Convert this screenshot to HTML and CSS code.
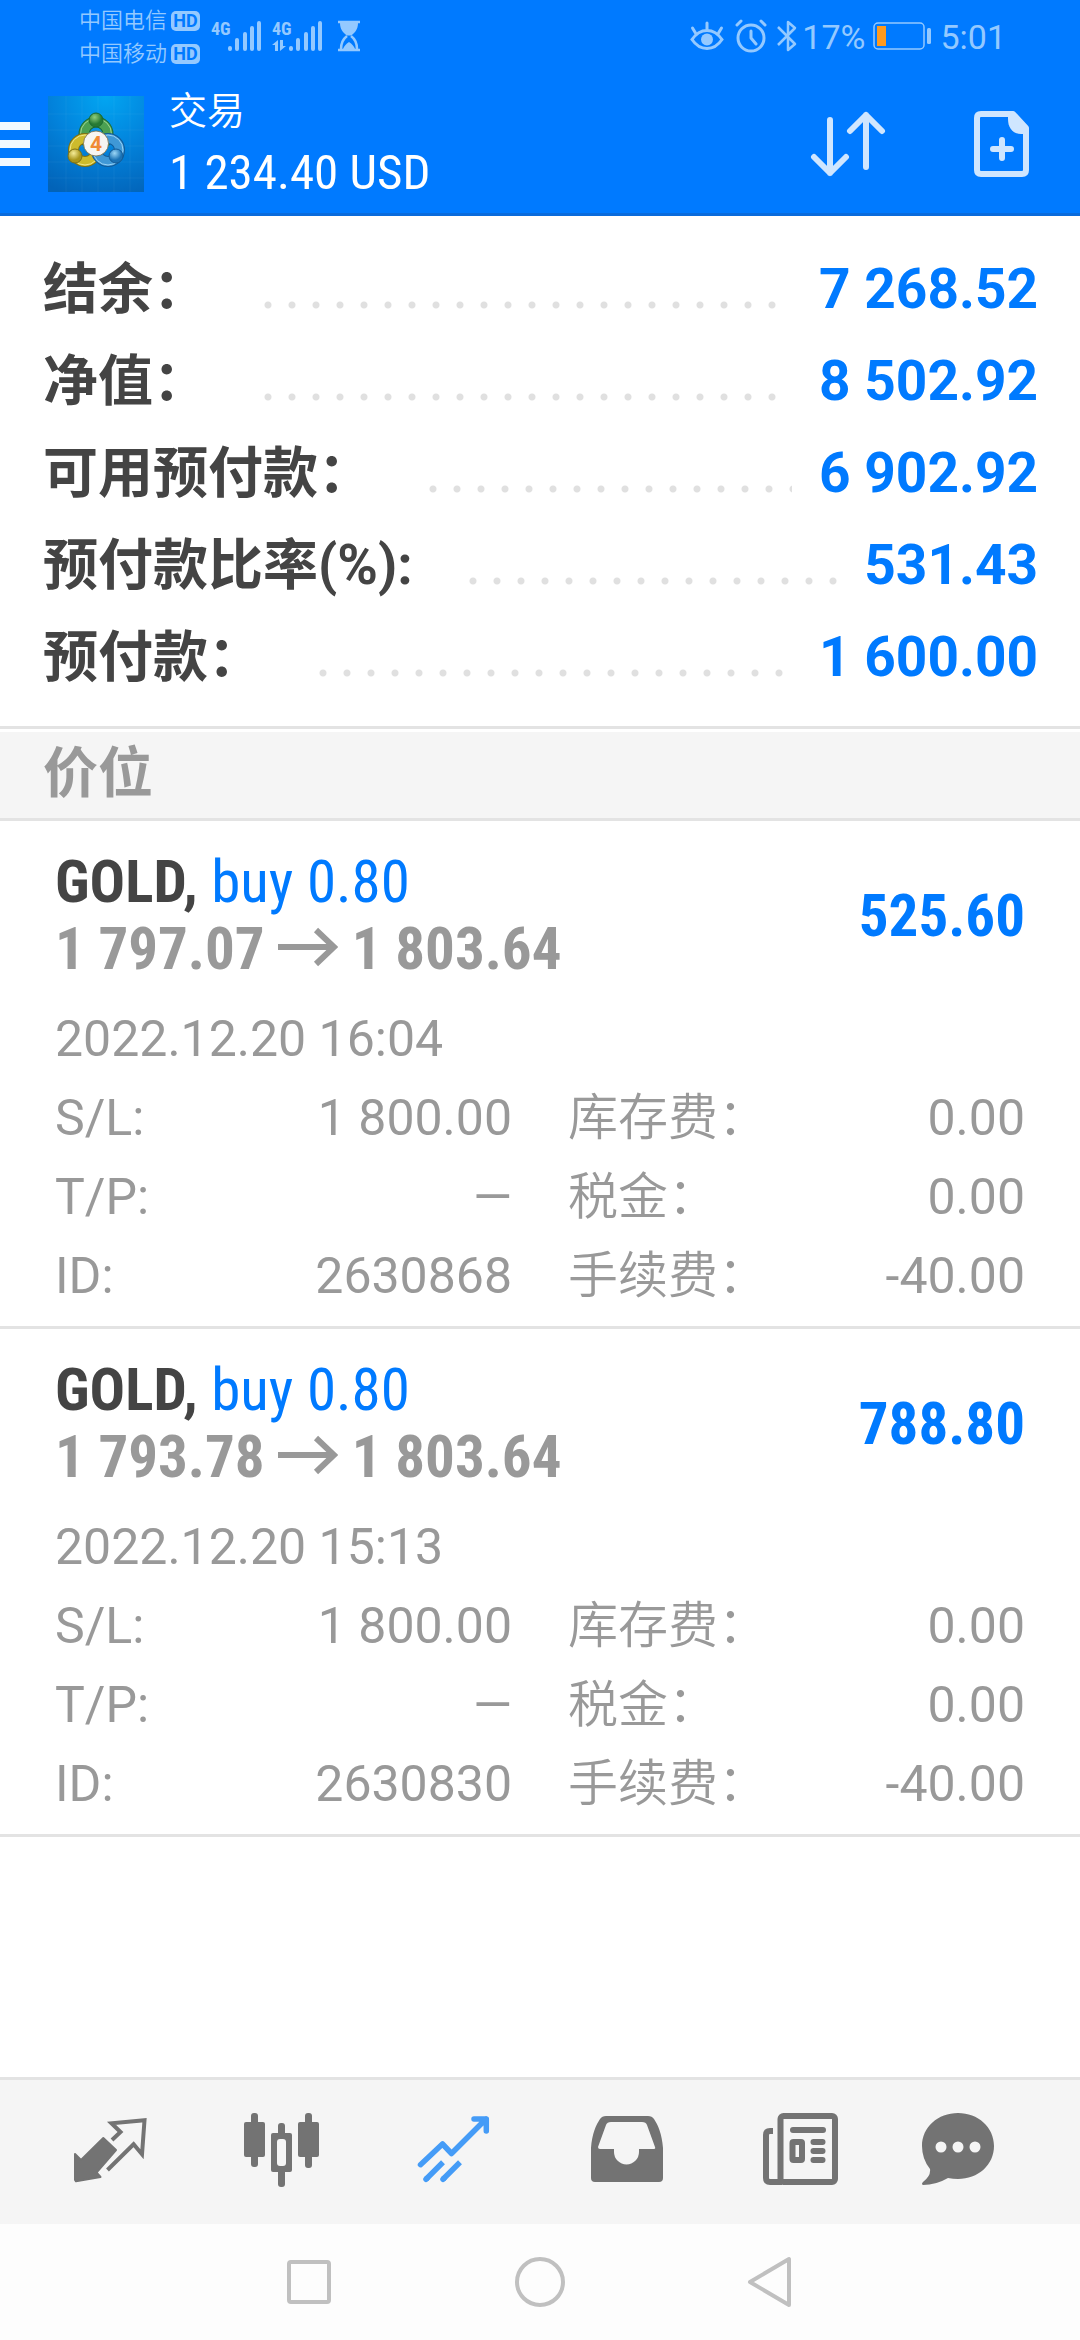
FILE: index.html
```html
<!DOCTYPE html>
<html lang="zh-CN">
<head>
<meta charset="utf-8">
<meta name="viewport" content="width=device-width, initial-scale=1">
<title>交易</title>
<link rel="stylesheet" href="styles.css">
</head>
<body>
<div class="app">
  <header class="header">
    <div class="status">
      <div class="carriers">
        <div class="carrier">中国电信<span class="hd">HD</span></div>
        <div class="carrier">中国移动<span class="hd">HD</span></div>
      </div>
      <div class="signal">
        <span class="net">4G</span>
        <svg width="34" height="32" viewBox="0 0 34 32" fill="none" stroke="currentColor" stroke-width="4" stroke-linecap="round"><path d="M2 28v1M9 20v9M17 14v15M24 8v21M31 3v26"/></svg>
      </div>
      <div class="signal">
        <span class="net">4G</span>
        <svg class="data" width="14" height="12" viewBox="0 0 14 12" fill="currentColor"><path d="M6 0v11H3V5H0zM8 0h3v6h3l-6 5z"/></svg>
        <svg width="34" height="32" viewBox="0 0 34 32" fill="none" stroke="currentColor" stroke-width="4" stroke-linecap="round"><path d="M2 28v1M9 20v9M17 14v15M24 8v21M31 3v26"/></svg>
      </div>
      <svg class="hourglass" width="24" height="32" viewBox="0 0 24 32"><path d="M1 2h22M1 30h22" stroke="currentColor" stroke-width="2.500"/><path d="M3 3h18c0 6-3 10-7 12.500h-4C6 13 3 9 3 3z" fill="currentColor"/><path d="M10 16c-4 3-6 7-6 13M14 16c4 3 6 7 6 13" fill="none" stroke="currentColor" stroke-width="2.500"/><path d="M6 29c1-3 3-5 6-7 3 2 5 4 6 7z" fill="currentColor"/></svg>
      <div class="status-right">
        <svg class="eye" width="34" height="32" viewBox="0 0 34 32" fill="none" stroke="currentColor" stroke-width="3" stroke-linecap="round"><path d="M2 19.500c4-6 9-9 15-9s11 3 15 9c-4 6-9 9-15 9s-11-3-15-9zM17 3v7M2.500 8l3 5M31.500 8l-3 5"/><circle cx="17" cy="19.500" r="6" fill="currentColor" stroke="none"/></svg>
        <svg class="alarm" width="32" height="34" viewBox="0 0 32 34" fill="none" stroke="currentColor" stroke-width="3" stroke-linecap="round" stroke-linejoin="round"><circle cx="16" cy="19" r="13"/><path d="M16 12v7l5 6M2 6l4-4M30 6l-4-4"/></svg>
        <svg class="bluetooth" width="22" height="34" viewBox="0 0 22 34" fill="none" stroke="currentColor" stroke-width="2.500" stroke-linejoin="round"><path d="M2 8l17 17-7 6V3l7 6L2 26"/></svg>
        <span class="status-text percent">17%</span>
        <svg class="battery" width="59" height="30" viewBox="0 0 59 30"><rect x="1" y="2" width="50" height="26" rx="4" fill="none" stroke="currentColor" stroke-width="1.500"/><rect x="4" y="5" width="9" height="20" fill="#ff9a1f"/><rect x="54" y="7" width="4" height="16" rx="1.500" fill="currentColor"/></svg>
        <span class="status-text">5:01</span>
      </div>
    </div>
    <div class="appbar">
      <button class="icon-button menu" aria-label="菜单"><svg width="30" height="48" viewBox="0 0 30 48" fill="#f2f9ff"><path d="M0 2h30v8H0zM0 20h30v8H0zM0 38h30v8H0z"/></svg></button>
      <svg class="logo" width="96" height="96" viewBox="0 0 96 96">
        <defs>
          <radialGradient id="sky" cx=".6" cy="0" r="1.100"><stop offset="0" stop-color="#02a6f2"/><stop offset=".5" stop-color="#0283dc"/><stop offset="1" stop-color="#0263b8"/></radialGradient>
          <radialGradient id="green" cx=".4" cy=".3"><stop offset="0" stop-color="#8fce7c"/><stop offset="1" stop-color="#267a33"/></radialGradient>
          <radialGradient id="gold" cx=".4" cy=".3"><stop offset="0" stop-color="#f5ec98"/><stop offset="1" stop-color="#a8951a"/></radialGradient>
          <radialGradient id="blue" cx=".4" cy=".3"><stop offset="0" stop-color="#9bd6f6"/><stop offset="1" stop-color="#1a72b5"/></radialGradient>
        </defs>
        <rect width="96" height="96" fill="url(#sky)"/>
        <path d="M18 0v96M34 0v96M50 0v96M66 0v96M82 0v96M0 18h96M0 34h96M0 50h96M0 66h96M0 82h96" stroke="#fff" stroke-opacity=".05"/>
        <g fill="none">
          <circle cx="48" cy="38" r="12" stroke="#1c6a30" stroke-width="11"/>
          <circle cx="48" cy="38" r="12" stroke="#4ba052" stroke-width="9"/>
          <circle cx="48" cy="38" r="15.500" stroke="#9fd58f"/>
          <circle cx="37" cy="54" r="11.500" stroke="#7d7015" stroke-width="11"/>
          <circle cx="37" cy="54" r="11.500" stroke="#cdbb2c" stroke-width="9"/>
          <circle cx="37" cy="54" r="15" stroke="#efe58a"/>
          <circle cx="60" cy="54" r="11.500" stroke="#125b98" stroke-width="11"/>
          <circle cx="60" cy="54" r="11.500" stroke="#3f98d6" stroke-width="9"/>
          <circle cx="60" cy="54" r="15" stroke="#9bd3f5"/>
        </g>
        <circle cx="48" cy="24" r="7" fill="url(#green)" stroke="#1c6a30"/>
        <circle cx="27" cy="60" r="7" fill="url(#gold)" stroke="#7d7015"/>
        <circle cx="68" cy="60" r="7" fill="url(#blue)" stroke="#125b98"/>
        <circle cx="48" cy="47.500" r="12.500" fill="#f6f5f2" stroke="#776c45" stroke-width=".8"/>
        <text x="48" y="55" text-anchor="middle" font-family="Roboto, sans-serif" font-size="21" font-weight="700" fill="#f08a35">4</text>
      </svg>
      <div class="heading">
        <h1 class="title">交易</h1>
        <div class="profit">1 234.40 USD</div>
      </div>
      <button class="icon-button sort" aria-label="排序"><svg width="76" height="68" viewBox="0 0 76 68" fill="none" stroke="#cfe6ff" stroke-width="6" stroke-linecap="round" stroke-linejoin="round"><path d="M20 10v53M4 47l16 16 16-16M56 57V5M40 21L56 5l16 16"/></svg></button>
      <button class="icon-button add" aria-label="新订单"><svg width="56" height="68" viewBox="0 0 56 68"><path d="M7 4h32l13 14v42q0 4-4 4H7q-4 0-4-4V8q0-4 4-4z" fill="none" stroke="#cfe6ff" stroke-width="6" stroke-linejoin="round"/><path d="M34 4h6l13 13v7h-6C39 24 34 18 34 9z" fill="#cfe6ff"/><path d="M19 39h18M28 30v18" stroke="#cfe6ff" stroke-width="6" stroke-linecap="round"/></svg></button>
    </div>
  </header>

  <main class="content">
    <dl class="summary">
      <div class="summary-row"><dt>结余：</dt><dd>7 268.52</dd></div>
      <div class="summary-row"><dt>净值：</dt><dd>8 502.92</dd></div>
      <div class="summary-row"><dt>可用预付款：</dt><dd>6 902.92</dd></div>
      <div class="summary-row"><dt>预付款比率(%):</dt><dd>531.43</dd></div>
      <div class="summary-row"><dt>预付款：</dt><dd>1 600.00</dd></div>
    </dl>
    <h2 class="section">价位</h2>

    <article class="position">
      <div class="position-head">
        <div class="deal">
          <div><b class="symbol">GOLD,</b> <span class="side">buy 0.80</span></div>
          <div class="prices">1 797.07 <svg class="arrow" width="60" height="40" viewBox="0 0 60 40" fill="none" stroke="currentColor" stroke-width="6"><path d="M0 20h56M38 3l18 17-18 17"/></svg> 1 803.64</div>
        </div>
        <div class="result">525.60</div>
      </div>
      <time class="date">2022.12.20 16:04</time>
      <div class="details">
        <dl class="fields">
          <div class="field"><dt>S/L:</dt><dd>1 800.00</dd></div>
          <div class="field"><dt>T/P:</dt><dd>—</dd></div>
          <div class="field"><dt>ID:</dt><dd>2630868</dd></div>
        </dl>
        <dl class="fields costs">
          <div class="field"><dt>库存费：</dt><dd>0.00</dd></div>
          <div class="field"><dt>税金：</dt><dd>0.00</dd></div>
          <div class="field"><dt>手续费：</dt><dd>-40.00</dd></div>
        </dl>
      </div>
    </article>

    <article class="position">
      <div class="position-head">
        <div class="deal">
          <div><b class="symbol">GOLD,</b> <span class="side">buy 0.80</span></div>
          <div class="prices">1 793.78 <svg class="arrow" width="60" height="40" viewBox="0 0 60 40" fill="none" stroke="currentColor" stroke-width="6"><path d="M0 20h56M38 3l18 17-18 17"/></svg> 1 803.64</div>
        </div>
        <div class="result">788.80</div>
      </div>
      <time class="date">2022.12.20 15:13</time>
      <div class="details">
        <dl class="fields">
          <div class="field"><dt>S/L:</dt><dd>1 800.00</dd></div>
          <div class="field"><dt>T/P:</dt><dd>—</dd></div>
          <div class="field"><dt>ID:</dt><dd>2630830</dd></div>
        </dl>
        <dl class="fields costs">
          <div class="field"><dt>库存费：</dt><dd>0.00</dd></div>
          <div class="field"><dt>税金：</dt><dd>0.00</dd></div>
          <div class="field"><dt>手续费：</dt><dd>-40.00</dd></div>
        </dl>
      </div>
    </article>
  </main>

  <nav class="tabs">
    <button class="tab" aria-label="行情"><svg width="96" height="96" viewBox="0 0 96 96"><path d="M41.300 34L54 46 34.500 68.500 38.500 73 14 77.300 13 76V50l6 6z" fill="currentColor" stroke="currentColor" stroke-width="2" stroke-linejoin="round"/><path d="M50 36l8.500-8-9-8.700 33-3-2.500 34-8.400-10L45.500 66" fill="none" stroke="currentColor" stroke-width="4"/></svg></button>
    <button class="tab" aria-label="图表"><svg width="96" height="96" viewBox="0 0 96 96" fill="currentColor"><rect x="10" y="18" width="21" height="35" rx="2"/><rect x="17" y="9" width="7" height="54" rx="3"/><rect x="64" y="18" width="21" height="35" rx="2"/><rect x="71" y="9" width="7" height="55" rx="3"/><rect x="44" y="19" width="7" height="64" rx="3"/><rect x="37" y="29" width="21" height="39" rx="2"/><rect x="43" y="35" width="9" height="27" rx="3" fill="#f5f5f5"/></svg></button>
    <button class="tab active" aria-label="交易"><svg width="96" height="96" viewBox="0 0 96 96" fill="none" stroke="currentColor" stroke-width="5.500" stroke-linecap="round" stroke-linejoin="round"><path d="M14.500 60.700L36.500 40l9 9.500L80 15M68 15h12.300v12"/><path d="M20 75.300l17-17M37 75.300l17-17" stroke-linecap="butt"/><path d="M20 75.300l1-1M37 75.300l1-1"/></svg></button>
    <button class="tab" aria-label="历史"><svg width="96" height="96" viewBox="0 0 96 96"><path fill="currentColor" fill-rule="evenodd" d="M13 44C14 30 18 21 22 15q2-3 6-3h42q4 0 6 3c4 6 8 15 9 29v30q0 4-4 4H17q-4 0-4-4zM33 18q-4 0-5 3l-8 22q0 2 2 2h14v3a12.500 12.500 0 0 0 25 0v-3h14q3 0 2-2l-8-22q-1-3-5-3z"/></svg></button>
    <button class="tab" aria-label="新闻"><svg width="96" height="96" viewBox="0 0 96 96" fill="none" stroke="currentColor" stroke-width="6"><rect x="30.500" y="12" width="54.500" height="66" rx="3"/><path d="M23 27h-3q-4 0-4 4v43q0 4 4 4h12"/><path d="M43 26h30M63.500 38h9M63.500 47h9M63.500 56h9" stroke-linecap="round"/><rect x="42.500" y="38" width="9.500" height="18" rx="1"/></svg></button>
    <button class="tab" aria-label="消息"><svg width="96" height="96" viewBox="0 0 96 96"><path fill="currentColor" d="M36 9c20 0 36 14 36 33S56 75 36 75q-5 0-10-1Q14 81 1 81q-2-1 0-3 8-6 7-13Q0 55 0 42C0 23 16 9 36 9z"/><g fill="#f5f5f5"><circle cx="19" cy="43" r="5.500"/><circle cx="36" cy="43" r="5.500"/><circle cx="53" cy="43" r="5.500"/></g></svg></button>
  </nav>
  <nav class="system">
    <button class="key" aria-label="最近任务"><svg width="54" height="54" viewBox="0 0 54 54"><rect x="7" y="7" width="40" height="40" rx="2"/></svg></button>
    <button class="key" aria-label="主页"><svg width="54" height="54" viewBox="0 0 54 54"><circle cx="27" cy="27" r="23"/></svg></button>
    <button class="key" aria-label="返回"><svg width="54" height="54" viewBox="0 0 54 54"><path d="M45 4v46L6 27z"/></svg></button>
  </nav>
</div>
</body>
</html>
```
FILE: styles.css
```css
* {
  box-sizing: border-box;
}

body {
  margin: 0;
  font-family: Roboto, "Noto Sans CJK SC", sans-serif;
  color: #444;
  background: #fff;
}

h1, h2, dl, dd {
  margin: 0;
  font-weight: inherit;
}

button {
  padding: 0;
  border: 0;
  background: none;
  color: inherit;
}

svg {
  display: block;
  flex: none;
}

.app {
  display: flex;
  flex-direction: column;
  min-height: 100vh;
}

/* Header */
.header {
  background: #007aff;
  color: #fff;
  box-shadow: inset 0 -3px #0a6bdc;
}

.status {
  display: flex;
  align-items: center;
  height: 72px;
  padding: 0 74px 0 79px;
  color: #94c9ff;
}

.carriers {
  padding-top: 2px;
}

.carrier {
  display: flex;
  align-items: center;
  gap: 4px;
  font-size: 22px;
  line-height: 33px;
  font-weight: 350;
}

.hd {
  width: 29px;
  border-radius: 5px;
  background: #94c9ff;
  color: #007aff;
  font-size: 18px;
  line-height: 20px;
  font-weight: 700;
  text-align: center;
}

.signal {
  display: flex;
  position: relative;
  margin-left: 11px;
}

.signal + .signal {
  margin-left: 10px;
}

.net {
  width: 17px;
  font-family: "Roboto Condensed", Roboto, sans-serif;
  font-size: 18px;
  line-height: 18px;
  font-weight: 700;
}

.data {
  position: absolute;
  left: 0;
  bottom: 0;
}

.hourglass {
  margin-left: 14px;
}

.status-right {
  display: flex;
  align-items: center;
  margin-left: auto;
}

.alarm {
  margin-left: 11px;
}

.bluetooth {
  margin-left: 9px;
}

.status-text {
  padding-top: 2px;
  font-size: 34px;
  font-weight: 400;
}

.percent {
  margin: 0 8px 0 4px;
}

.battery {
  margin-right: 8px;
}

.appbar {
  display: flex;
  align-items: center;
  height: 144px;
  padding-right: 50px;
}

.logo {
  margin: 0 25px 0 18px;
}

.heading {
  display: grid;
  flex: 1;
  gap: 2px;
}

.title {
  font-size: 38px;
  line-height: 56px;
  font-weight: 350;
}

.profit {
  font-family: "Roboto Condensed", Roboto, sans-serif;
  font-size: 49px;
  line-height: 64px;
}

.sort {
  margin-right: 88px;
}

/* Account summary */
.summary {
  padding: 27px 42px 23px 43px;
  border-bottom: 3px solid #e3e3e3;
}

.summary-row {
  display: flex;
  align-items: center;
  line-height: 92px;
  font-size: 55px;
  font-weight: 700;
}

.summary-row::after {
  content: "";
  order: 1;
  flex: 1;
  height: 8px;
  margin: 32px 27px 0 56px;
  background: radial-gradient(circle at 4px 4px, #e0e0e0 3px, transparent 4px) 0 0 / 24px 8px repeat-x;
}

.summary-row dd {
  order: 2;
  color: #007aff;
}

.section {
  margin-top: 3px;
  padding: 0 43px 3px;
  border-bottom: 3px solid #e3e3e3;
  background: #f5f5f5;
  color: #999;
  font-size: 55px;
  line-height: 83px;
  font-weight: 700;
}

/* Open positions */
.content {
  flex: 1;
}

.position {
  padding: 27px 55px 10px;
  border-bottom: 3px solid #e3e3e3;
  color: #999;
  font-size: 50px;
  line-height: 79px;
}

.position-head {
  display: flex;
  align-items: center;
  justify-content: space-between;
  margin-bottom: 18px;
  font-family: "Roboto Condensed", Roboto, sans-serif;
  font-size: 59px;
  line-height: 67px;
}

.symbol {
  color: #444;
}

.side,
.result {
  color: #007aff;
}

.prices,
.result {
  font-weight: 700;
}

.arrow {
  display: inline-block;
  vertical-align: 2px;
}

.date {
  display: block;
}

.details {
  display: grid;
  grid-template-columns: 1fr 1fr;
  column-gap: 56px;
}

.field {
  display: flex;
  justify-content: space-between;
}

.costs dt {
  font-weight: 350;
}

/* Bottom bars */
.tabs {
  display: flex;
  padding: 24px;
  border-top: 3px solid #e3e3e3;
  background: #f5f5f5;
  color: #737373;
}

.tab {
  display: flex;
  flex: 1;
  justify-content: center;
}

.active {
  color: #459cf7;
}

.system {
  display: flex;
  justify-content: center;
  gap: 177px;
  padding: 31px 0;
  background: #fdfdfd;
}

.key {
  fill: none;
  stroke: #c0c0c0;
  stroke-width: 4;
  stroke-linejoin: round;
}
```
